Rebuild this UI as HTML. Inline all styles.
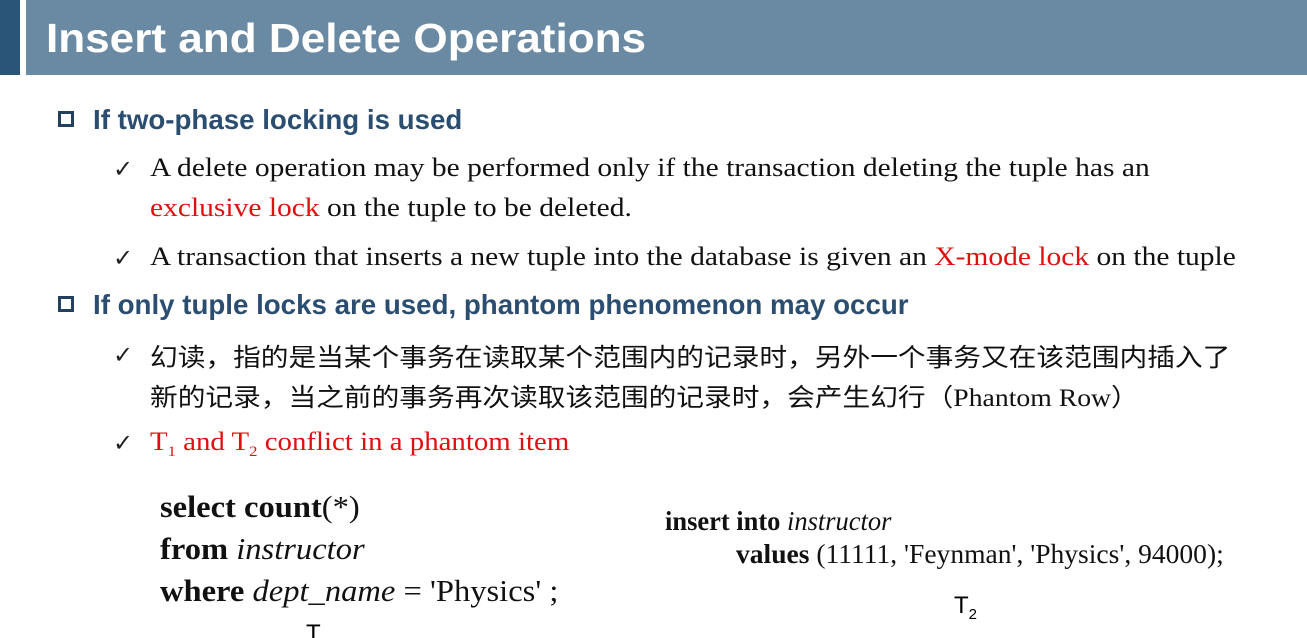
<!DOCTYPE html>
<html><head><meta charset="utf-8"><style>
html,body{margin:0;width:1307px;height:638px;overflow:hidden;background:#fff}
body{position:relative;font-family:"Liberation Serif","Noto Serif CJK SC",serif}
.a{position:absolute;white-space:nowrap}
.h1{left:0;top:0;width:20px;height:75px;background:#2b5479}
.h2{left:26px;top:0;width:1281px;height:75px;background:#6a89a3}
.t{left:46px;top:15px;font:bold 41px "Liberation Sans",sans-serif;color:#fff;transform:scaleX(1.075);transform-origin:0 0}
.sq{width:16px;height:16px;border:3px solid #23405e;box-sizing:border-box}
.b{font:bold 27.5px "Liberation Sans",sans-serif;color:#2b4e70;transform:scaleX(1.007);transform-origin:0 0}
.s{font-size:26px;color:#111;transform:scaleX(1.135);transform-origin:0 0}
.ck{font:24px "DejaVu Sans",sans-serif;color:#222}
.r{color:#e01010}
.cj{font-family:"Liberation Serif","Noto Sans CJK SC",sans-serif;font-size:25px;transform:scaleX(1.108)}
.c{font-size:31px;color:#111;transform:scaleX(1.05);transform-origin:0 0}
.c2{font-size:27px;color:#111;transform:scaleX(1.02);transform-origin:0 0}
</style></head><body>
<div class="a h1"></div><div class="a h2"></div>
<div class="a t">Insert and Delete Operations</div>
<div class="a sq" style="left:58px;top:111px"></div>
<div class="a b" style="left:93px;top:104px">If two-phase locking is used</div>
<div class="a ck" style="left:113px;top:155px">✓</div>
<div class="a s" style="left:150px;top:153px">A delete operation may be performed only if the transaction deleting the tuple has an</div>
<div class="a s" style="left:150px;top:193px"><span class="r">exclusive lock</span> on the tuple to be deleted.</div>
<div class="a ck" style="left:113px;top:244px">✓</div>
<div class="a s" style="left:150px;top:242px">A transaction that inserts a new tuple into the database is given an <span class="r">X-mode lock</span> on the tuple</div>
<div class="a sq" style="left:58px;top:296px"></div>
<div class="a b" style="left:93px;top:289px">If only tuple locks are used, phantom phenomenon may occur</div>
<div class="a ck" style="left:113px;top:341px">✓</div>
<div class="a s cj" style="left:150px;top:338px">幻读，指的是当某个事务在读取某个范围内的记录时，另外一个事务又在该范围内插入了</div>
<div class="a s cj" style="left:150px;top:378px">新的记录，当之前的事务再次读取该范围的记录时，会产生幻行（Phantom Row）</div>
<div class="a ck" style="left:113px;top:429px">✓</div>
<div class="a s r" style="left:150px;top:427px;transform:scaleX(1.11)">T<sub style="font-size:15px">1</sub> and T<sub style="font-size:15px">2</sub> conflict in a phantom item</div>
<div class="a c" style="left:160px;top:489px"><b>select count</b>(*)</div>
<div class="a c" style="left:160px;top:531px"><b>from</b> <i>instructor</i></div>
<div class="a c" style="left:160px;top:573px"><b>where</b> <i>dept_name</i> = 'Physics' ;</div>
<div class="a c2" style="left:665px;top:506px;transform:scaleX(.98)"><b>insert into</b> <i>instructor</i></div>
<div class="a c2" style="left:736px;top:539px"><b>values</b> (11111, 'Feynman', 'Physics', 94000);</div>
<div class="a" style="left:954px;top:592px;font:24px 'Liberation Sans',sans-serif">T<sub style="font-size:15px">2</sub></div>
<div class="a" style="left:306px;top:620px;font:24px 'Liberation Sans',sans-serif">T</div>
</body></html>
